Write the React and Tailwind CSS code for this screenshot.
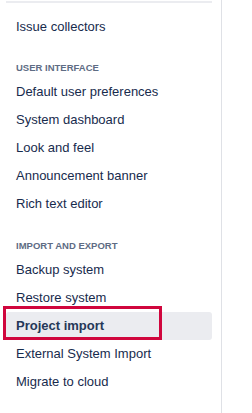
const groups = [
  { title: null, items: ['Issue collectors'] },
  {
    title: 'USER INTERFACE',
    items: ['Default user preferences', 'System dashboard', 'Look and feel', 'Announcement banner', 'Rich text editor'],
  },
  {
    title: 'IMPORT AND EXPORT',
    items: ['Backup system', 'Restore system', 'Project import', 'External System Import', 'Migrate to cloud'],
  },
];

const ACTIVE = 'Project import';

function NavItem({ label }) {
  const active = label === ACTIVE;
  return (
    <div className="relative">
      <a
        className={
          'flex h-[28px] items-center rounded-[3px] px-[10px] text-[13px] ' +
          (active ? 'bg-[#ebecf0] font-bold text-[#253858]' : 'text-[#172b4d]')
        }
      >
        {label}
      </a>
      {active && (
        <div className="pointer-events-none absolute left-[-3px] top-[-6px] h-[34px] w-[159px] border-[3px] border-[#d0063d]" />
      )}
    </div>
  );
}

export default function App() {
  return (
    <div className="h-[413px] w-[252px] bg-white" style={{ fontFamily: '"Liberation Sans", Arial, sans-serif' }}>
      <div className="h-full w-[222px] border-r border-[#dfe1e6] pl-[6px] pr-[9px] pt-px">
        <div className="border-t-2 border-[#ebecf0]" />
        {groups.map((g, i) => (
          <div key={i} className={i === 0 ? 'pt-[10px]' : i === 1 ? 'pt-[20px]' : 'pt-[21px]'}>
            {g.title && (
              <h4 className="mb-[3px] px-[10px] text-[9.5px] font-bold leading-[14px] text-[#5e6c84]">
                {g.title}
              </h4>
            )}
            {g.items.map((it) => (
              <NavItem key={it} label={it} />
            ))}
          </div>
        ))}
      </div>
    </div>
  );
}
